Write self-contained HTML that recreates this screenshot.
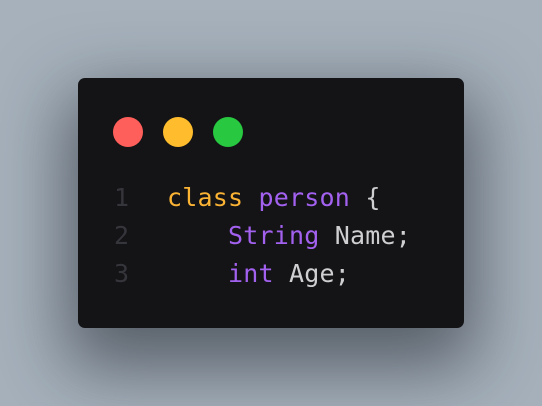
<!DOCTYPE html>
<html><head><style>
html,body{margin:0;padding:0;width:542px;height:406px;overflow:hidden}
body{background:#a6b1bc;position:relative;font-family:"DejaVu Sans Mono","Liberation Mono",monospace}
.card{position:absolute;left:78px;top:78px;width:386px;height:250px;background:#141416;border-radius:7px;box-shadow:0 28px 70px 12px rgba(35,40,48,0.6)}
.dot{position:absolute;top:117px;width:30px;height:30px;border-radius:50%}
.code{position:absolute;left:0;top:0;font-size:25px;line-height:38px;white-space:pre;letter-spacing:0.2px}
.ln{position:absolute;left:114px;color:#35353c}
.t{position:absolute;left:167px;color:#d0d0d0}
.k{color:#fbb334}.p{color:#a361f0}.w{color:#cfcfd2}
</style></head><body>
<div class="card"></div>
<div class="dot" style="left:113px;background:#ff5f5a"></div>
<div class="dot" style="left:163px;background:#ffbd2e"></div>
<div class="dot" style="left:213px;background:#28c840"></div>
<div class="ln code" style="top:179px">1</div>
<div class="ln code" style="top:217px">2</div>
<div class="ln code" style="top:255px">3</div>
<div class="t code" style="top:179px"><span class="k">class</span> <span class="p">person</span> <span class="w">{</span></div>
<div class="t code" style="top:217px">    <span class="p">String</span> <span class="w">Name;</span></div>
<div class="t code" style="top:255px">    <span class="p">int</span> <span class="w">Age;</span></div>
</body></html>
